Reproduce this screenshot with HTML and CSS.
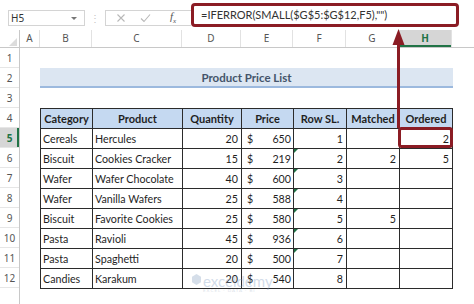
FILE: index.html
```html
<!DOCTYPE html>
<html lang="en">
<head>
    <meta charset="UTF-8">
    <meta name="viewport" content="width=device-width, initial-scale=1.0">
    <title>Product Price List</title>
    <link rel="stylesheet" href="styles.css">
</head>
<body>
    <div class="window">
        <!-- Name box and formula bar -->
        <div class="toolbar">
            <div class="name-box">
                <span>H5</span>
                <span class="caret"></span>
            </div>
            <div class="grip">&#8942;</div>
            <div class="fx-buttons">
                <svg class="btn-x" width="10" height="10" viewBox="0 0 10 10"><path d="M1.5 1.5l7 7M8.5 1.5l-7 7" stroke="#b8b8b8" stroke-width="1.1" fill="none"/></svg>
                <svg class="btn-ok" width="11" height="10" viewBox="0 0 11 10"><path d="M1 5.5l3 3L10 1.5" stroke="#b8b8b8" stroke-width="1.1" fill="none"/></svg>
                <span class="fx">f<sub>x</sub></span>
            </div>
            <div class="formula">=IFERROR(SMALL($G$5:$G$12,F5),"")</div>
        </div>

        <!-- Worksheet -->
        <div class="sheet">
            <div class="corner">
                <svg width="20" height="18" viewBox="0 0 20 18"><polygon points="17,8 17,16 9,16" fill="#dcdcdc"/></svg>
            </div>
            <div class="col-heads">
                <div class="col-head" style="width:20px">A</div>
                <div class="col-head" style="width:52px">B</div>
                <div class="col-head" style="width:90px">C</div>
                <div class="col-head" style="width:59px">D</div>
                <div class="col-head" style="width:52px">E</div>
                <div class="col-head" style="width:53px">F</div>
                <div class="col-head" style="width:53px">G</div>
                <div class="col-head active" style="width:53px">H</div>
            </div>
            <div class="row-heads">
                <div class="row-head">1</div>
                <div class="row-head">2</div>
                <div class="row-head">3</div>
                <div class="row-head">4</div>
                <div class="row-head active">5</div>
                <div class="row-head">6</div>
                <div class="row-head">7</div>
                <div class="row-head">8</div>
                <div class="row-head">9</div>
                <div class="row-head">10</div>
                <div class="row-head">11</div>
                <div class="row-head">12</div>
                <div class="row-head"></div>
            </div>
            <div class="cells">
                <div class="blank-row"></div>
                <div class="title-band">Product Price List</div>
                <div class="blank-row"></div>
                <table class="price-table">
                    <colgroup>
                        <col style="width:52px">
                        <col style="width:90px">
                        <col style="width:59px">
                        <col style="width:52px">
                        <col style="width:53px">
                        <col style="width:53px">
                        <col style="width:53px">
                    </colgroup>
                    <thead>
                        <tr>
                            <th>Category</th>
                            <th>Product</th>
                            <th>Quantity</th>
                            <th>Price</th>
                            <th>Row SL.</th>
                            <th>Matched</th>
                            <th>Ordered</th>
                        </tr>
                    </thead>
                    <tbody>
                        <tr>
                            <td>Cereals</td><td>Hercules</td><td class="num">20</td>
                            <td><div class="price"><span>$</span><span>650</span></div></td>
                            <td class="num">1</td><td class="num"></td><td class="num">2</td>
                        </tr>
                        <tr>
                            <td>Biscuit</td><td>Cookies Cracker</td><td class="num">15</td>
                            <td><div class="price"><span>$</span><span>219</span></div></td>
                            <td class="num flag">2</td><td class="num">2</td><td class="num">5</td>
                        </tr>
                        <tr>
                            <td>Wafer</td><td>Wafer Chocolate</td><td class="num">40</td>
                            <td><div class="price"><span>$</span><span>600</span></div></td>
                            <td class="num flag">3</td><td class="num"></td><td class="num"></td>
                        </tr>
                        <tr>
                            <td>Wafer</td><td>Vanilla Wafers</td><td class="num">25</td>
                            <td><div class="price"><span>$</span><span>588</span></div></td>
                            <td class="num flag">4</td><td class="num"></td><td class="num"></td>
                        </tr>
                        <tr>
                            <td>Biscuit</td><td>Favorite Cookies</td><td class="num">25</td>
                            <td><div class="price"><span>$</span><span>580</span></div></td>
                            <td class="num flag">5</td><td class="num">5</td><td class="num"></td>
                        </tr>
                        <tr>
                            <td>Pasta</td><td>Ravioli</td><td class="num">45</td>
                            <td><div class="price"><span>$</span><span>936</span></div></td>
                            <td class="num flag">6</td><td class="num"></td><td class="num"></td>
                        </tr>
                        <tr>
                            <td>Pasta</td><td>Spaghetti</td><td class="num">20</td>
                            <td><div class="price"><span>$</span><span>500</span></div></td>
                            <td class="num flag">7</td><td class="num"></td><td class="num"></td>
                        </tr>
                        <tr>
                            <td>Candies</td><td>Karakum</td><td class="num">20</td>
                            <td><div class="price"><span>$</span><span>540</span></div></td>
                            <td class="num">8</td><td class="num"></td><td class="num"></td>
                        </tr>
                    </tbody>
                </table>
            </div>
        </div>

        <!-- Annotation: arrow from formula bar to H5 -->
        <svg class="callout" width="474" height="304" viewBox="0 0 474 304">
            <polygon points="398.5,29 392.5,45 404.5,45" fill="#8b1c24"/>
            <rect x="397" y="44" width="3" height="84" fill="#8b1c24"/>
            <rect x="399.5" y="128.5" width="52" height="18" rx="2" fill="none" stroke="#8b1c24" stroke-width="3"/>
        </svg>

        <div class="watermark">
            <svg width="9" height="11" viewBox="0 0 9 11"><polygon points="4.5,0 9,2.7 9,8.3 4.5,11 0,8.3 0,2.7" fill="#8aa3c2"/></svg>
            <div>
                <div class="wm-name">exceldemy</div>
                <div class="wm-sub">EXCEL · DATA · BI</div>
            </div>
        </div>
    </div>
</body>
</html>
```

FILE: styles.css
```css
* {
    box-sizing: border-box;
}

body {
    margin: 0;
    background-color: #fff;
    font-family: "Lato", "Noto Sans", sans-serif;
    color: #1f1f1f;
}

.window {
    position: relative;
    width: 474px;
    height: 304px;
    overflow: hidden;
}

/* Toolbar */
.toolbar {
    display: flex;
    align-items: flex-start;
    height: 30px;
    padding: 3px 0 0 8px;
}

.name-box {
    display: flex;
    align-items: center;
    justify-content: space-between;
    width: 77px;
    height: 16px;
    margin-top: 7px;
    padding: 0 7px 0 2px;
    border: 1px solid #d4d4d4;
    font-family: "Noto Sans", sans-serif;
    font-size: 10px;
    color: #333;
}

.caret {
    width: 0;
    height: 0;
    border-left: 3px solid transparent;
    border-right: 3px solid transparent;
    border-top: 3px solid #777;
}

.grip {
    width: 8px;
    margin: 8px 0 0 5px;
    font-size: 10px;
    line-height: 14px;
    text-align: center;
    color: #c4c4c4;
}

.fx-buttons {
    display: flex;
    align-items: center;
    width: 86px;
    height: 16px;
    margin: 7px 0 0 7px;
    padding-left: 10px;
    border: 1px solid #d4d4d4;
    border-right: none;
}

.btn-ok {
    margin-left: 14px;
}

.fx {
    margin-left: 19px;
    font-family: "Liberation Serif", serif;
    font-style: italic;
    font-size: 11px;
    color: #555;
}

.fx sub {
    font-size: 7px;
}

.formula {
    width: 268px;
    height: 24px;
    padding-left: 7px;
    border: 3px solid #8b1c24;
    border-radius: 4px;
    font-size: 11px;
    line-height: 18px;
    color: #333;
}

/* Sheet */
.sheet {
    display: grid;
    grid-template-columns: 20px 1fr;
    grid-template-rows: 18px auto;
}

.corner {
    border-right: 1px solid #c8c8c8;
    border-bottom: 1px solid #c8c8c8;
}

.corner svg {
    display: block;
}

.col-heads {
    display: flex;
    border-bottom: 1px solid #c8c8c8;
}

.col-head {
    height: 17px;
    border-right: 1px solid #e2e2e2;
    font-family: "Noto Sans", sans-serif;
    font-size: 10px;
    line-height: 17px;
    text-align: center;
    color: #555;
}

.col-head.active {
    background-color: #d6d6d6;
    color: #217346;
    font-weight: bold;
    box-shadow: inset 0 -2px 0 #217346;
}

.row-heads {
    border-right: 1px solid #c8c8c8;
}

.row-head {
    height: 20px;
    border-bottom: 1px solid #e6e6e6;
    font-family: "Noto Sans", sans-serif;
    font-size: 10px;
    line-height: 21px;
    text-align: center;
    color: #555;
}

.row-head.active {
    background-color: #d6d6d6;
    color: #217346;
    font-weight: bold;
    box-shadow: inset -2px 0 0 #217346;
}

.cells {
    display: flex;
    flex-direction: column;
    align-items: flex-start;
}

.blank-row {
    height: 20px;
}

.title-band {
    width: 413px;
    height: 20px;
    margin-left: 20px;
    background-color: #dce6f2;
    border-bottom: 2px solid #9cb9de;
    font-size: 11.5px;
    font-weight: bold;
    line-height: 19px;
    text-align: center;
    color: #44546a;
}

.price-table {
    margin-left: 20px;
    width: 412px;
    table-layout: fixed;
    border-collapse: collapse;
    font-size: 10.7px;
}

.price-table tr {
    height: 20px;
}

.price-table th,
.price-table td {
    padding: 0 2px;
    border: 1px solid #2b2b2b;
    white-space: nowrap;
    overflow: hidden;
}

.price-table th {
    background-color: #c5d9f1;
    font-size: 11px;
    font-weight: bold;
    text-align: center;
}

.price-table td.num {
    text-align: right;
    padding-right: 3px;
}

.price-table td.flag {
    position: relative;
}

.price-table td.flag::before {
    content: "";
    position: absolute;
    left: 0;
    top: 0;
    border-top: 4px solid #1e7145;
    border-right: 4px solid transparent;
}

.price {
    display: flex;
    justify-content: space-between;
    padding: 0 0 0 3px;
}

/* Overlays */
.callout {
    position: absolute;
    left: 0;
    top: 0;
    pointer-events: none;
}

.watermark {
    position: absolute;
    left: 192px;
    top: 274px;
    display: flex;
    align-items: flex-start;
    gap: 2px;
    opacity: 0.35;
    pointer-events: none;
}

.wm-name {
    font-size: 15px;
    line-height: 14px;
    color: #7f9cc2;
}

.wm-sub {
    font-size: 4.5px;
    letter-spacing: 1px;
    color: #9aaac0;
}
```
